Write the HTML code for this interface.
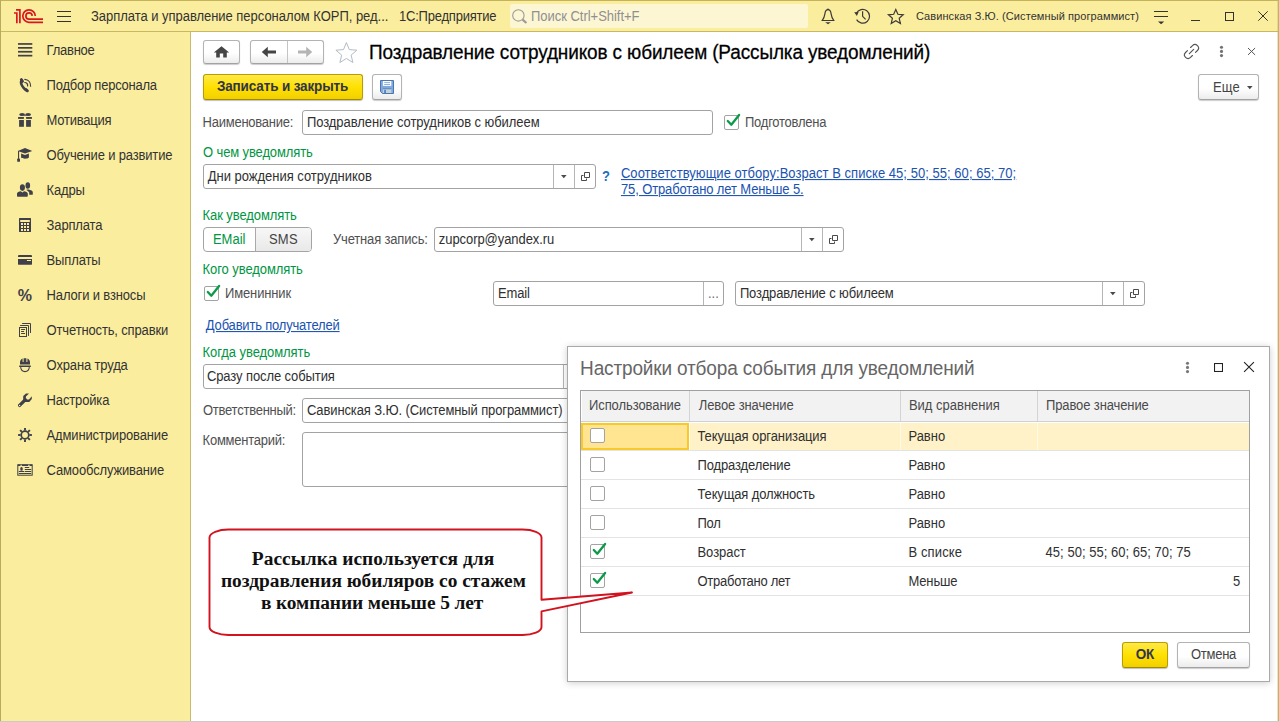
<!DOCTYPE html>
<html lang="ru">
<head>
<meta charset="utf-8">
<title>Поздравление сотрудников с юбилеем (Рассылка уведомлений)</title>
<style>
*{box-sizing:border-box;margin:0;padding:0}
html,body{width:1279px;height:722px;overflow:hidden;background:#fff}
body{position:relative;font-family:"Liberation Sans",Arial,sans-serif;font-size:13px;color:#333;line-height:16px}
.abs{position:absolute}
.t{position:absolute;white-space:nowrap;line-height:16px}
#frame-top{left:0;top:0;width:1279px;height:1px;background:#c4b35a}
#frame-left{left:0;top:0;width:1px;height:722px;background:#b9aa5c}
#frame-right{left:1277px;top:0;width:2px;height:722px;background:linear-gradient(90deg,rgba(196,179,90,.35) 0,rgba(196,179,90,.35) 50%,#c4b35a 50%,#c4b35a 100%)}
#frame-bottom{left:0;top:721px;width:1279px;height:1px;background:#cdc9c4}
#topbar{left:0;top:0;width:1279px;height:32px;background:#fbed9e;border-bottom:1px solid #c9b862}
#search{left:510px;top:4px;width:298px;height:24px;background:#fdf6d2;border-radius:2px}
#sidebar{left:0;top:32px;width:191px;height:689px;background:#fbed9e;border-right:1px solid #c9ba6c}
.nav{position:absolute;white-space:nowrap;color:#333;line-height:16px}
.btn{position:absolute;border:1px solid #b3b3b3;border-bottom-color:#a2a2a2;border-radius:3px;background:linear-gradient(#ffffff 0%,#ffffff 55%,#ececec 100%);box-shadow:0 1px 1px rgba(0,0,0,.2)}
.ybtn{position:absolute;border:1px solid #b89c00;border-bottom-color:#a08a00;border-radius:3px;background:linear-gradient(#ffe94a 0%,#ffe100 50%,#f2d000 100%);box-shadow:0 1px 1px rgba(0,0,0,.25)}
.yt{position:absolute;white-space:nowrap;line-height:16px;font-weight:bold;font-size:13.5px;color:#30344c}
.inp{position:absolute;height:25px;border:1px solid #a3a3a3;border-radius:3px;background:#fff}
.sep{position:absolute;width:1px;height:23px;background:#b5b5b5}
.v{position:absolute;white-space:nowrap;color:#303030;line-height:16px}
.lbl{position:absolute;white-space:nowrap;color:#505050;line-height:16px}
.grp{position:absolute;white-space:nowrap;color:#00963f;line-height:16px}
.lnk{position:absolute;white-space:nowrap;color:#1a53b0;text-decoration:underline;line-height:16px}
.cb{position:absolute;width:15px;height:15px;border:1px solid #a3a3a3;border-radius:2px;background:#fff}
#dlg{left:567px;top:346px;width:703px;height:336px;background:#fff;border:1px solid #a9a9a9;box-shadow:0 1px 7px rgba(0,0,0,.2)}
#tbl{left:580px;top:390px;width:670px;height:243px;border:1px solid #a0a0a0;background:#fff}
.th{position:absolute;top:391px;height:30px;background:#f2f2f2}
.hl{position:absolute;left:581px;width:668px;height:1px;background:#e3e3e3}
.cell{position:absolute;white-space:nowrap;color:#303030;line-height:16px}
.nav,.lbl,.grp,.lnk,.v,.cell,.t13{transform:scaleY(1.07);transform-origin:0 12.5px}
.yt{transform:scaleY(1.035);transform-origin:0 12.5px}
</style>
</head>
<body>
<div id="topbar" class="abs"></div>
<div id="search" class="abs"></div>
<svg class="abs" style="left:0;top:0" width="1279" height="32" viewBox="0 0 1279 32" fill="none">
<g stroke="#d81820" stroke-width="1.7" fill="none"><path d="M14 13H16.85V23.2"/><path d="M16 9.85H19.9V23.2"/><path d="M35.3 15.9A6.25 6.25 0 1 0 29 22.3H43"/><path d="M32.2 15.9A3.15 3.15 0 1 0 29 19.15H43"/></g>
<path d="M57 11.5H71M57 16.5H71M57 21.5H71" stroke="#333" stroke-width="1"/>
<circle cx="518.4" cy="15.4" r="5.7" stroke="#9b9b9b" stroke-width="1.1"/><path d="M522.6 19.6L526.4 23" stroke="#9b9b9b" stroke-width="2.2"/>
<g stroke="#3a3a3a" stroke-width="1.2" fill="none" stroke-linejoin="round"><path d="M821.5 20.5H834.5M822.3 20.3C824.6 17.5 824.6 15.5 825 13.2C825.4 10.8 826.6 9.6 828 9.6C829.4 9.6 830.6 10.8 831 13.2C831.4 15.5 831.4 17.5 833.7 20.3"/></g>
<path d="M825.2 22.3H830.8L828 24.3Z" fill="#3a3a3a"/><circle cx="828" cy="9.3" r="0.9" fill="#3a3a3a"/>
<g stroke="#3a3a3a" stroke-width="1.2" fill="none"><path d="M856.4 13.3A6.9 6.9 0 1 1 856.6 19.6"/><path d="M862.6 11.2V16.3L865.6 19.3"/></g>
<path d="M854.2 12.3L858.6 12.1L856.9 15.9Z" fill="#3a3a3a"/>
<path d="M895.8 9.4L897.9 14.3L903.2 14.8L899.2 18.3L900.4 23.5L895.8 20.8L891.2 23.5L892.4 18.3L888.4 14.8L893.7 14.3Z" stroke="#3a3a3a" stroke-width="1.2" stroke-linejoin="miter"/>
<path d="M1154 11.5H1168M1154 16.5H1168" stroke="#333" stroke-width="1"/><path d="M1158 21.4H1164.2L1161.1 24.2Z" fill="#333"/>
<path d="M1191 20.5H1200" stroke="#333" stroke-width="1"/>
<rect x="1225.5" y="12.5" width="8" height="8" stroke="#333" stroke-width="1"/>
<path d="M1258.3 11.3L1267.7 20.7M1267.7 11.3L1258.3 20.7" stroke="#333" stroke-width="1"/>
</svg>
<div id="t1" class="t t13" style="left:90.95px;top:9px;letter-spacing:-0.031px;color:#333">Зарплата и управление персоналом КОРП, ред...</div>
<div id="t2" class="t t13" style="left:399.00px;top:9px;letter-spacing:-0.216px;color:#333">1С:Предприятие</div>
<div id="t3" class="t t13" style="left:531.00px;top:9px;letter-spacing:-0.026px;color:#8f8f93">Поиск Ctrl+Shift+F</div>
<div id="t4" class="t" style="left:915.95px;top:8px;letter-spacing:0.085px;color:#333;font-size:11px">Савинская З.Ю. (Системный программист)</div>
<div id="sidebar" class="abs"></div>
<svg class="abs" style="left:17px;top:42px" width="16" height="16" viewBox="0 0 16 16"><g fill="#40404a"><rect x="1" y="1.1" width="14.3" height="1.7"/><rect x="1" y="5" width="14.3" height="1.7"/><rect x="1" y="8.9" width="14.3" height="1.7"/><rect x="1" y="12.8" width="14.3" height="1.7"/></g></svg>
<div id="t5" class="nav" style="left:46.60px;top:43px;letter-spacing:-0.250px;">Главное</div>
<svg class="abs" style="left:17px;top:77px" width="16" height="16" viewBox="0 0 16 16"><g fill="none" stroke="#40404a" stroke-linecap="round"><path d="M4.6 3.2C3.6 5.2 4.6 8.6 6.6 10.9C7.7 12.2 8.6 12.9 9.6 13.4" stroke-width="2.6"/><path d="M4.3 2.6L5.5 4.4M9 12.6L10.4 13.8" stroke-width="2.9"/><path d="M7.8 2.4C11.2 2.6 13.7 5.2 13.6 9.2" stroke-width="1.2"/><path d="M7.8 5.5C9.6 5.6 10.9 6.9 10.6 9" stroke-width="1.2"/></g></svg>
<div id="t6" class="nav" style="left:46.60px;top:78px;letter-spacing:-0.235px;">Подбор персонала</div>
<svg class="abs" style="left:17px;top:112px" width="16" height="16" viewBox="0 0 16 16"><g fill="#40404a"><ellipse cx="5.1" cy="2.5" rx="2.9" ry="1.5"/><ellipse cx="11.1" cy="2.5" rx="2.9" ry="1.5"/><path d="M6.5 3.2L8.1 4.3L9.7 3.2Z"/><rect x="1.1" y="5" width="5.8" height="1.9"/><rect x="9.1" y="5" width="5.8" height="1.9"/><rect x="2.1" y="8" width="4.8" height="6.8"/><rect x="9.1" y="8" width="4.8" height="6.8"/></g></svg>
<div id="t7" class="nav" style="left:46.60px;top:113px;letter-spacing:-0.250px;">Мотивация</div>
<svg class="abs" style="left:17px;top:147px" width="16" height="16" viewBox="0 0 16 16"><g fill="#40404a"><path d="M0.8 4L8 1L15.3 4L8 6.6Z"/><path d="M4.1 6.6L8 8.1L11.9 6.6V10.6C10.5 12.2 5.5 12.2 4.1 10.6Z"/><rect x="1" y="4" width="1.1" height="8.2"/><rect x="0.2" y="11.6" width="2.8" height="3.2" rx="0.6"/></g></svg>
<div id="t8" class="nav" style="left:46.60px;top:148px;letter-spacing:-0.163px;">Обучение и развитие</div>
<svg class="abs" style="left:17px;top:182px" width="16" height="16" viewBox="0 0 16 16"><g fill="#40404a"><ellipse cx="10.8" cy="3.5" rx="2.3" ry="3.3"/><path d="M9.6 7.6L11.6 7.4C14 8 15.8 8.8 15.8 10.2V12.2C15.8 12.6 15.5 12.8 15.1 12.8H12.2V10.6C11.6 9.4 10.4 8.6 9.6 8.2Z"/><ellipse cx="5.4" cy="5.6" rx="2.5" ry="3.3"/><path d="M0 11.4C0 10.4 2 9.6 3.8 9.2L5.4 10.4L7 9.2C8.8 9.6 10.8 10.4 10.8 11.4V14C10.8 14.5 10.5 14.8 10 14.8H0.8C0.3 14.8 0 14.5 0 14Z"/></g></svg>
<div id="t9" class="nav" style="left:46.60px;top:183px;letter-spacing:-0.150px;letter-spacing:-.15px;">Кадры</div>
<svg class="abs" style="left:17px;top:217px" width="16" height="16" viewBox="0 0 16 16"><path fill="#40404a" fill-rule="evenodd" d="M2.6 1H13.4C13.8 1 14 1.2 14 1.6V14.4C14 14.8 13.8 15 13.4 15H2.6C2.2 15 2 14.8 2 14.4V1.6C2 1.2 2.2 1 2.6 1ZM3.2 3V5H12.8V3ZM4 6.1V8H6V6.1ZM7 6.1V8H9V6.1ZM10 6.1V8H12V6.1ZM4 9.1V11H6V9.1ZM7 9.1V11H9V9.1ZM10 9.1V11H12V9.1ZM4 12.1V14H6V12.1ZM7 12.1V14H9V12.1ZM10 12.1V14H12V12.1Z"/></svg>
<div id="t10" class="nav" style="left:46.60px;top:218px;letter-spacing:-0.150px;letter-spacing:-.15px;">Зарплата</div>
<svg class="abs" style="left:17px;top:252px" width="16" height="16" viewBox="0 0 16 16"><path fill="#40404a" fill-rule="evenodd" d="M1.9 3.1H14.1C14.6 3.1 15 3.5 15 4V4.9H1V4C1 3.5 1.4 3.1 1.9 3.1ZM1 6.9H15V11.9C15 12.4 14.6 12.8 14.1 12.8H1.9C1.4 12.8 1 12.4 1 11.9ZM9.9 8V9.1H14V8Z"/></svg>
<div id="t11" class="nav" style="left:46.60px;top:253px;letter-spacing:-0.150px;letter-spacing:-.15px;">Выплаты</div>
<div class="t" style="left:17.8px;top:286px;font-size:16px;font-weight:bold;line-height:20px;color:#40404a">%</div>
<div id="t12" class="nav" style="left:46.60px;top:288px;letter-spacing:-0.150px;letter-spacing:-.15px;">Налоги и взносы</div>
<svg class="abs" style="left:17px;top:322px" width="16" height="16" viewBox="0 0 16 16"><g fill="none" stroke="#40404a" stroke-width="1"><rect x="2.5" y="5.5" width="7" height="9"/><path d="M4.5 7.5H7.7M4.5 9.5H6.7M4.5 11.5H7.7M3.5 3.5H11.5V13.5M5.5 1.5H13.5V10.6" stroke-linecap="round"/></g></svg>
<div id="t13" class="nav" style="left:46.60px;top:323px;letter-spacing:-0.150px;letter-spacing:-.15px;">Отчетность, справки</div>
<svg class="abs" style="left:17px;top:357px" width="16" height="16" viewBox="0 0 16 16"><g fill="#40404a"><path d="M3 7.6V5.6C3 3.6 4.2 2.2 5.6 1.6V5H6.6V1.2H9.4V5H10.4V1.6C11.8 2.2 13 3.6 13 5.6V7.6Z"/><rect x="2" y="8.4" width="12" height="1.5" rx="0.7"/><path d="M3.6 10.2C4 13 5.8 14.6 8 14.6C10.2 14.6 12 13 12.4 10.2" fill="none" stroke="#40404a" stroke-width="1.1"/></g></svg>
<div id="t14" class="nav" style="left:46.60px;top:358px;letter-spacing:-0.150px;letter-spacing:-.15px;">Охрана труда</div>
<svg class="abs" style="left:17px;top:392px" width="16" height="16" viewBox="0 0 16 16"><g fill="#40404a"><path d="M2.6 13.4L8.2 7.9" stroke="#40404a" stroke-width="3.3" stroke-linecap="round"/><path d="M6.2 9.2V4L9 1.5H12L8.9 4.6V6.2L10.1 7.5H12L14.8 4.2V7.1L12.3 10H7.4Z"/><circle cx="2.6" cy="13.5" r="0.7" fill="#fbed9e"/></g></svg>
<div id="t15" class="nav" style="left:46.60px;top:393px;letter-spacing:-0.150px;letter-spacing:-.15px;">Настройка</div>
<svg class="abs" style="left:17px;top:427px" width="16" height="16" viewBox="0 0 16 16"><g fill="none" stroke="#40404a"><circle cx="8" cy="8" r="3.8" stroke-width="1.7"/><g stroke-width="1.9"><path d="M12.40 8.00L14.90 8.00"/><path d="M11.11 11.11L12.88 12.88"/><path d="M8.00 12.40L8.00 14.90"/><path d="M4.89 11.11L3.12 12.88"/><path d="M3.60 8.00L1.10 8.00"/><path d="M4.89 4.89L3.12 3.12"/><path d="M8.00 3.60L8.00 1.10"/><path d="M11.11 4.89L12.88 3.12"/></g></g></svg>
<div id="t16" class="nav" style="left:46.60px;top:428px;letter-spacing:-0.150px;letter-spacing:-.15px;">Администрирование</div>
<svg class="abs" style="left:17px;top:462px" width="16" height="16" viewBox="0 0 16 16"><g fill="none" stroke="#40404a" stroke-width="1"><rect x="0.8" y="2.8" width="14.4" height="10.4"/><path d="M0.8 3.3H3.3M5 3.3H11M12.7 3.3H15.2" stroke-width="1.6"/><path d="M8.2 5.5H11.8M8.2 7.5H13.8M8.2 9.5H13.8M2.2 11.5H13.8M2.2 9.5H6.8" stroke-linecap="round"/><ellipse cx="4.5" cy="6.9" rx="1.3" ry="1.9" fill="#40404a" stroke="none"/></g></svg>
<div id="t17" class="nav" style="left:46.60px;top:463px;letter-spacing:-0.150px;letter-spacing:-.15px;">Самообслуживание</div>
<div class="btn" style="left:203px;top:40px;width:37px;height:24px"></div>
<svg class="abs" style="left:213px;top:46px" width="17" height="12" viewBox="0 0 17 12"><path d="M8.5 0.3L16.2 6.6H13.8V11.6H10.2V7.6H6.8V11.6H3.2V6.6H0.8Z" fill="#454545"/></svg>
<div class="btn" style="left:250px;top:40px;width:74px;height:24px"></div>
<div class="abs" style="left:287px;top:41px;width:1px;height:22px;background:#c4c4c4"></div>
<svg class="abs" style="left:261px;top:46px" width="16" height="12" viewBox="0 0 16 12"><path d="M0.8 6L6.8 0.8V4.6H15V7.4H6.8V11.2Z" fill="#454545"/></svg>
<svg class="abs" style="left:297px;top:46px" width="16" height="12" viewBox="0 0 16 12"><path d="M15.2 6L9.2 0.8V4.6H1V7.4H9.2V11.2Z" fill="#b4b4b4"/></svg>
<svg class="abs" style="left:334px;top:41px" width="25" height="23" viewBox="0 0 25 23"><path d="M12.4 1.6L15.3 8.6L22.9 9.2L17.1 14.1L18.9 21.5L12.4 17.5L5.9 21.5L7.7 14.1L1.9 9.2L9.5 8.6Z" fill="#fff" stroke="#b3bcc4" stroke-width="1"/></svg>
<div id="t18" class="t" style="left:368.95px;top:41.6px;letter-spacing:-0.145px;font-size:19px;line-height:22px;color:#000;-webkit-text-stroke:.25px #000;transform:scaleY(1.05);transform-origin:0 17.6px">Поздравление сотрудников с юбилеем (Рассылка уведомлений)</div>
<svg class="abs" style="left:1181px;top:41px" width="21" height="21" viewBox="1181 41 21 21" fill="none" stroke="#555" stroke-width="1.15" stroke-linecap="round"><g transform="translate(1191.5 51.5) rotate(-45)"><path d="M2.2 -3.5H4.9A3.5 3.5 0 0 1 4.9 3.5H2.2M-2.2 -3.5H-4.9A3.5 3.5 0 0 0 -4.9 3.5H-2.2M-3.05 0H3.05"/></g></svg>
<svg class="abs" style="left:1218.9px;top:45.1px" width="5" height="13" viewBox="0 0 5 13" fill="#727272"><circle cx="2.5" cy="2.2" r="1.55"/><circle cx="2.5" cy="6.4" r="1.55"/><circle cx="2.5" cy="10.6" r="1.55"/></svg>
<svg class="abs" style="left:1247px;top:47px" width="9" height="9" viewBox="0 0 9 9" stroke="#555" stroke-width="1"><path d="M1 1L8.1 7.9M8.1 1L1 7.9"/></svg>
<div class="ybtn" style="left:203px;top:74px;width:160px;height:26px"></div>
<div id="t19" class="yt" style="left:216.90px;top:79px;letter-spacing:-0.136px;">Записать и закрыть</div>
<div class="btn" style="left:372px;top:74px;width:30px;height:26px"></div>
<svg class="abs" style="left:380px;top:80px" width="14" height="14" viewBox="0 0 14 14"><path d="M0.5 0.5H13.5V13.5H2.5L0.5 11.5Z" fill="#7fa9df" stroke="#4877b4" stroke-width="1"/><rect x="2.9" y="1" width="8.4" height="4.9" fill="#fff"/><path d="M4.2 2.6H10M4.2 4.5H10" stroke="#7fa9df" stroke-width="0.9"/><rect x="2.9" y="9" width="8.4" height="4" fill="#c7d2d4"/><path d="M2.9 8.8H11.3" stroke="#4877b4" stroke-width="0.7"/><rect x="4.3" y="9.8" width="1.5" height="3.2" fill="#3f74ba"/></svg>
<div class="btn" style="left:1198px;top:74px;width:61px;height:26px"></div>
<div id="t20" class="t t13" style="left:1212.90px;top:80px;letter-spacing:0.250px;color:#444">Еще</div>
<svg class="abs" style="left:1246.8px;top:86px" width="6" height="4" viewBox="0 0 6 4"><path d="M0 0H5.6L2.8 3.3Z" fill="#4a4a4a"/></svg>
<div id="t21" class="lbl" style="left:202.60px;top:115px;letter-spacing:-0.250px;">Наименование:</div>
<div class="inp" style="left:302px;top:110px;width:411px"></div>
<div id="t22" class="v" style="left:306.90px;top:115px;letter-spacing:-0.060px;">Поздравление сотрудников с юбилеем</div>
<div class="cb" style="left:724px;top:115px"></div><svg class="abs" style="left:724px;top:113px" width="18" height="16" viewBox="0 0 18 16"><path d="M3.8 8L7.3 11.7L15.1 2" fill="none" stroke="#0a9a48" stroke-width="2.3" stroke-linecap="round" stroke-linejoin="round"/></svg>
<div id="t23" class="lbl" style="left:745.00px;top:115px;letter-spacing:-0.245px;">Подготовлена</div>
<div id="t24" class="grp" style="left:203.00px;top:145px;letter-spacing:-0.120px;">О чем уведомлять</div>
<div class="inp" style="left:203px;top:164px;width:393px"></div><i class="sep" style="left:553px;top:165px"></i><i class="sep" style="left:574px;top:165px"></i>
<div id="t25" class="v" style="left:207.80px;top:169px;letter-spacing:-0.020px;">Дни рождения сотрудников</div>
<svg class="abs" style="left:560.8px;top:175px" width="6" height="4" viewBox="0 0 6 4"><path d="M0 0H5.6L2.8 3.3Z" fill="#4a4a4a"/></svg><svg class="abs" style="left:580px;top:171px" width="10" height="10" viewBox="0 0 10 10" fill="none" stroke="#4a4a4a" stroke-width="1"><path d="M4.5 1.5H9.5V6.5H4.5Z"/><path d="M3.5 4.5H1.5V9.5H6.5V7.5"/></svg>
<div id="t26" class="t t13" style="left:602.00px;top:169px;color:#1a6fc4;font-weight:bold">?</div>
<div id="t27" class="lnk" style="left:620.95px;top:166px;letter-spacing:0.040px;">Соответствующие отбору:Возраст В списке 45; 50; 55; 60; 65; 70;</div>
<div id="t28" class="lnk" style="left:620.95px;top:182px;letter-spacing:-0.117px;">75, Отработано лет Меньше 5.</div>
<div id="t29" class="grp" style="left:202.60px;top:208px;letter-spacing:-0.088px;">Как уведомлять</div>
<div class="btn" style="left:203px;top:227px;width:109px;height:25px;background:#fff;box-shadow:none;border-color:#a4a4a4;border-radius:4px"></div>
<div class="abs" style="left:255px;top:228px;width:56px;height:23px;background:linear-gradient(#f7f7f7,#e9e9e9);border-left:1px solid #a9a9a9;border-radius:0 3px 3px 0"></div>
<div id="t30" class="t t13" style="left:212.95px;top:232px;color:#00963f">EMail</div>
<div id="t31" class="t t13" style="left:268.95px;top:232px;letter-spacing:0.225px;color:#444">SMS</div>
<div id="t32" class="lbl" style="left:332.95px;top:232px;letter-spacing:-0.161px;">Учетная запись:</div>
<div class="inp" style="left:434px;top:227px;width:410px"></div><i class="sep" style="left:801px;top:228px"></i><i class="sep" style="left:822px;top:228px"></i>
<div id="t33" class="v" style="left:438.85px;top:232px;letter-spacing:-0.070px;">zupcorp@yandex.ru</div>
<svg class="abs" style="left:808.8px;top:238px" width="6" height="4" viewBox="0 0 6 4"><path d="M0 0H5.6L2.8 3.3Z" fill="#4a4a4a"/></svg><svg class="abs" style="left:828px;top:234px" width="10" height="10" viewBox="0 0 10 10" fill="none" stroke="#4a4a4a" stroke-width="1"><path d="M4.5 1.5H9.5V6.5H4.5Z"/><path d="M3.5 4.5H1.5V9.5H6.5V7.5"/></svg>
<div id="t34" class="grp" style="left:202.60px;top:262px;letter-spacing:-0.080px;">Кого уведомлять</div>
<div class="cb" style="left:204px;top:286px"></div><svg class="abs" style="left:204px;top:284px" width="18" height="16" viewBox="0 0 18 16"><path d="M3.8 8L7.3 11.7L15.1 2" fill="none" stroke="#0a9a48" stroke-width="2.3" stroke-linecap="round" stroke-linejoin="round"/></svg>
<div id="t35" class="lbl" style="left:225.00px;top:286px;letter-spacing:-0.141px;">Именинник</div>
<div class="inp" style="left:493px;top:281px;width:231px"></div><i class="sep" style="left:703px;top:282px"></i>
<div id="t36" class="v" style="left:497.90px;top:286px;letter-spacing:-0.112px;">Email</div>
<div id="t37" class="t t13" style="left:708.00px;top:286px;color:#707070">...</div>
<div class="inp" style="left:735px;top:281px;width:410px"></div><i class="sep" style="left:1102px;top:282px"></i><i class="sep" style="left:1123px;top:282px"></i>
<div id="t38" class="v" style="left:739.90px;top:286px;letter-spacing:-0.119px;">Поздравление с юбилеем</div>
<svg class="abs" style="left:1109.8px;top:292px" width="6" height="4" viewBox="0 0 6 4"><path d="M0 0H5.6L2.8 3.3Z" fill="#4a4a4a"/></svg><svg class="abs" style="left:1129px;top:288px" width="10" height="10" viewBox="0 0 10 10" fill="none" stroke="#4a4a4a" stroke-width="1"><path d="M4.5 1.5H9.5V6.5H4.5Z"/><path d="M3.5 4.5H1.5V9.5H6.5V7.5"/></svg>
<div id="t39" class="lnk" style="left:205.85px;top:318px;letter-spacing:-0.189px;">Добавить получателей</div>
<div id="t40" class="grp" style="left:202.60px;top:345px;letter-spacing:-0.075px;">Когда уведомлять</div>
<div class="inp" style="left:203px;top:364px;width:393px"></div><i class="sep" style="left:563px;top:365px"></i>
<div id="t41" class="v" style="left:206.95px;top:369px;letter-spacing:-0.100px;">Сразу после события</div>
<div id="t42" class="lbl" style="left:203.00px;top:403px;letter-spacing:-0.250px;">Ответственный:</div>
<div class="inp" style="left:302px;top:398px;width:411px"></div>
<div id="t43" class="v" style="left:306.90px;top:403px;letter-spacing:-0.110px;">Савинская З.Ю. (Системный программист)</div>
<div id="t44" class="lbl" style="left:202.60px;top:433px;letter-spacing:-0.250px;">Комментарий:</div>
<div class="inp" style="left:302px;top:432px;width:411px;height:55px"></div>
<div id="dlg" class="abs"></div>
<div id="t45" class="t" style="left:580.05px;top:357.7px;letter-spacing:-0.143px;font-size:19px;line-height:22px;color:#666;transform:scaleY(1.09);transform-origin:0 17.6px">Настройки отбора события для уведомлений</div>
<svg class="abs" style="left:1185px;top:361.2px" width="5" height="13" viewBox="0 0 5 13" fill="#777"><circle cx="2.5" cy="2.2" r="1.55"/><circle cx="2.5" cy="6.4" r="1.55"/><circle cx="2.5" cy="10.6" r="1.55"/></svg>
<svg class="abs" style="left:1214px;top:363px" width="9" height="9" viewBox="0 0 9 9" fill="none" stroke="#222" stroke-width="1.1"><rect x="0.5" y="0.5" width="8" height="8"/></svg>
<svg class="abs" style="left:1243px;top:361px" width="12" height="12" viewBox="0 0 12 12" stroke="#222" stroke-width="1.1"><path d="M1.1 1.1L10.9 10.9M10.9 1.1L1.1 10.9"/></svg>
<div id="tbl" class="abs"></div>
<div class="th" style="left:582px;width:107px"></div>
<div id="t46" class="t t13" style="left:588.95px;top:398px;letter-spacing:-0.075px;color:#4a4a4a">Использование</div>
<div class="th" style="left:690px;width:210px"></div>
<div id="t47" class="t t13" style="left:698.85px;top:398px;letter-spacing:-0.121px;color:#4a4a4a">Левое значение</div>
<div class="th" style="left:901px;width:136px"></div>
<div id="t48" class="t t13" style="left:908.95px;top:398px;color:#4a4a4a">Вид сравнения</div>
<div class="th" style="left:1038px;width:211px"></div>
<div id="t49" class="t t13" style="left:1045.95px;top:398px;letter-spacing:-0.109px;color:#4a4a4a">Правое значение</div>
<div class="abs" style="left:581px;top:421px;width:668px;height:1px;background:#cfcfd6"></div>
<div class="abs" style="left:689px;top:391px;width:1px;height:30px;background:#d4d4d4"></div>
<div class="abs" style="left:900px;top:391px;width:1px;height:30px;background:#d4d4d4"></div>
<div class="abs" style="left:1037px;top:391px;width:1px;height:30px;background:#d4d4d4"></div>
<div class="abs" style="left:690px;top:423px;width:559px;height:27px;background:#fff2c8"></div>
<div class="abs" style="left:900px;top:423px;width:1px;height:27px;background:#fff9e6"></div>
<div class="abs" style="left:1037px;top:423px;width:1px;height:27px;background:#fff9e6"></div>
<div class="abs" style="left:581px;top:423px;width:108px;height:27px;background:#ffe591;border:2px solid #f9c928"></div>
<div class="hl" style="top:450px"></div>
<div class="cb" style="left:590px;top:428px"></div>
<div id="t50" class="cell" style="left:697.50px;top:429px;letter-spacing:-0.100px;">Текущая организация</div>
<div id="t51" class="cell" style="left:908.40px;top:429px;">Равно</div>
<div class="hl" style="top:479px"></div>
<div class="cb" style="left:590px;top:457px"></div>
<div id="t52" class="cell" style="left:697.50px;top:458px;letter-spacing:-0.133px;">Подразделение</div>
<div id="t53" class="cell" style="left:908.40px;top:458px;">Равно</div>
<div class="hl" style="top:508px"></div>
<div class="cb" style="left:590px;top:486px"></div>
<div id="t54" class="cell" style="left:697.50px;top:487px;letter-spacing:-0.140px;">Текущая должность</div>
<div id="t55" class="cell" style="left:908.40px;top:487px;">Равно</div>
<div class="hl" style="top:537px"></div>
<div class="cb" style="left:590px;top:515px"></div>
<div id="t56" class="cell" style="left:697.50px;top:516px;letter-spacing:-0.250px;">Пол</div>
<div id="t57" class="cell" style="left:908.40px;top:516px;">Равно</div>
<div class="hl" style="top:566px"></div>
<div class="cb" style="left:590px;top:544px"></div>
<svg class="abs" style="left:590px;top:542px" width="18" height="16" viewBox="0 0 18 16"><path d="M3.8 8L7.3 11.7L15.1 2" fill="none" stroke="#0a9a48" stroke-width="2.3" stroke-linecap="round" stroke-linejoin="round"/></svg>
<div id="t58" class="cell" style="left:697.50px;top:545px;letter-spacing:-0.060px;">Возраст</div>
<div id="t59" class="cell" style="left:908.40px;top:545px;letter-spacing:0.142px;">В списке</div>
<div id="t60" class="cell" style="left:1045.60px;top:545px;letter-spacing:0.026px;">45; 50; 55; 60; 65; 70; 75</div>
<div class="hl" style="top:595px"></div>
<div class="cb" style="left:590px;top:573px"></div>
<svg class="abs" style="left:590px;top:571px" width="18" height="16" viewBox="0 0 18 16"><path d="M3.8 8L7.3 11.7L15.1 2" fill="none" stroke="#0a9a48" stroke-width="2.3" stroke-linecap="round" stroke-linejoin="round"/></svg>
<div id="t61" class="cell" style="left:697.50px;top:574px;letter-spacing:-0.250px;">Отработано лет</div>
<div id="t62" class="cell" style="left:908.40px;top:574px;letter-spacing:-0.126px;">Меньше</div>
<div id="t63" class="cell" style="left:1232.95px;top:574px;">5</div>
<div class="ybtn" style="left:1122px;top:642px;width:46px;height:26px"></div>
<div id="t64" class="yt" style="left:1135.78px;top:647px;letter-spacing:-0.250px;">ОК</div>
<div class="btn" style="left:1177px;top:642px;width:73px;height:26px"></div>
<div id="t65" class="t t13" style="left:1190.95px;top:647px;letter-spacing:-0.250px;color:#444">Отмена</div>
<svg class="abs" style="left:200px;top:520px" width="440" height="125" viewBox="200 520 440 125">
<path d="M229 529.5H522.5A19 8 0 0 1 541.5 537.5V599.8L632 592.5L541.5 611.4V627A19 8 0 0 1 522.5 635H229A19 8 0 0 1 209.5 627V537.5A19 8 0 0 1 229 529.5Z" fill="#fff" stroke="#d2121e" stroke-width="1.9" stroke-linejoin="round"/>
</svg>
<div id="t66" class="t" style="left:251.80px;top:548px;letter-spacing:0.028px;font-family:'Liberation Serif','Times New Roman',serif;font-weight:bold;font-size:19.4px;line-height:22px;color:#111">Рассылка используется для</div>
<div id="t67" class="t" style="left:220.90px;top:570px;letter-spacing:-0.008px;font-family:'Liberation Serif','Times New Roman',serif;font-weight:bold;font-size:19.4px;line-height:22px;color:#111">поздравления юбиляров со стажем</div>
<div id="t68" class="t" style="left:260.92px;top:592px;letter-spacing:-0.102px;font-family:'Liberation Serif','Times New Roman',serif;font-weight:bold;font-size:19.4px;line-height:22px;color:#111">в компании меньше 5 лет</div>
<div id="frame-top" class="abs"></div>
<div id="frame-left" class="abs"></div>
<div id="frame-right" class="abs"></div>
<div id="frame-bottom" class="abs"></div>
</body>
</html>
